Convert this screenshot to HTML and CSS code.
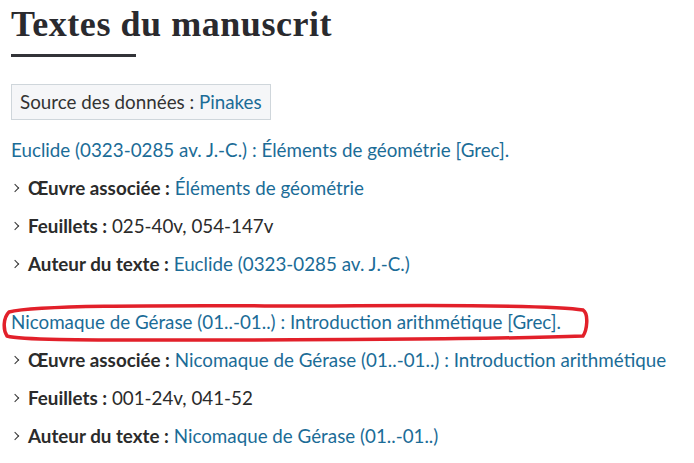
FILE: index.html
```html
<!DOCTYPE html>
<html lang="fr">
<head>
<meta charset="utf-8">
<link rel="stylesheet" href="styles.css">
</head>
<body>
<main class="page">
  <h1 class="title">Textes du manuscrit</h1>
  <div class="source">Source des données : <a class="link" href="#">Pinakes</a></div>

  <section class="text">
    <a class="link head" href="#">Euclide (0323-0285 av. J.-C.) : Éléments de géométrie [Grec].</a>
    <ul class="props">
      <li><span class="label">Œuvre associée :</span> <a class="link" href="#">Éléments de géométrie</a></li>
      <li><span class="label">Feuillets :</span> 025-40v, 054-147v</li>
      <li><span class="label">Auteur du texte :</span> <a class="link" href="#">Euclide (0323-0285 av. J.-C.)</a></li>
    </ul>
  </section>

  <section class="text second">
    <div class="marked">
      <a class="link head" href="#">Nicomaque de Gérase (01..-01..) : Introduction arithmétique [Grec].</a>
      <svg class="circle" viewBox="0 0 590 44" preserveAspectRatio="none" aria-hidden="true">
        <path d="M8 12 C 40 4, 200 6, 330 6 C 450 5, 560 6, 582 10 C 588 14, 586 30, 582 36 C 500 39, 300 40, 160 40 C 80 40, 20 40, 6 36 C 2 30, 2 18, 8 12 Z" fill="none" stroke="#e2202a" stroke-width="3.5"/>
      </svg>
    </div>
    <ul class="props">
      <li><span class="label">Œuvre associée :</span> <a class="link" href="#">Nicomaque de Gérase (01..-01..) : Introduction arithmétique</a></li>
      <li><span class="label">Feuillets :</span> 001-24v, 041-52</li>
      <li><span class="label">Auteur du texte :</span> <a class="link" href="#">Nicomaque de Gérase (01..-01..)</a></li>
    </ul>
  </section>
</main>
</body>
</html>
```

FILE: styles.css
```css
* { box-sizing: border-box; }
html, body { margin: 0; padding: 0; background: #fff; }
body {
  font-family: "Lato", "Open Sans", sans-serif;
  color: #2b2b2b;
  font-size: 18.8px;
}
.page { padding: 0 0 0 11px; }
.title {
  font-family: "Liberation Serif", serif;
  font-weight: 700;
  font-size: 36px;
  color: #2a2a2e;
  margin: 0;
  padding-top: 4px;
  line-height: 40px;
  letter-spacing: 0.55px;
}
.title::after {
  content: "";
  display: block;
  width: 125px;
  height: 3px;
  background: #323338;
  margin-top: 10px;
}
.source {
  display: inline-block;
  margin-top: 27px;
  padding: 7px 8px 7px 8px;
  background: #f5f6f8;
  border: 1px solid #cfd6db;
  line-height: 20px;
  color: #333;
}
.link { color: #1b6c97; text-decoration: none; }
.head { display: block; line-height: 22px; }
.text { margin-top: 19px; }
.second { margin-top: 36px; }
.props { list-style: none; margin: 0; padding: 0; }
.props li {
  position: relative;
  padding-left: 17px;
  margin-top: 16px;
  line-height: 22px;
}
.props li::before {
  content: "";
  position: absolute;
  left: 1px;
  top: 8px;
  width: 5px;
  height: 5px;
  border-top: 1.3px solid #333;
  border-right: 1.3px solid #333;
  transform: rotate(45deg);
}
.label { font-weight: 700; color: #2b2b2b; }
.marked { position: relative; }
.circle {
  position: absolute;
  left: -10px;
  top: -11px;
  width: 590px;
  height: 44px;
  pointer-events: none;
}
```
